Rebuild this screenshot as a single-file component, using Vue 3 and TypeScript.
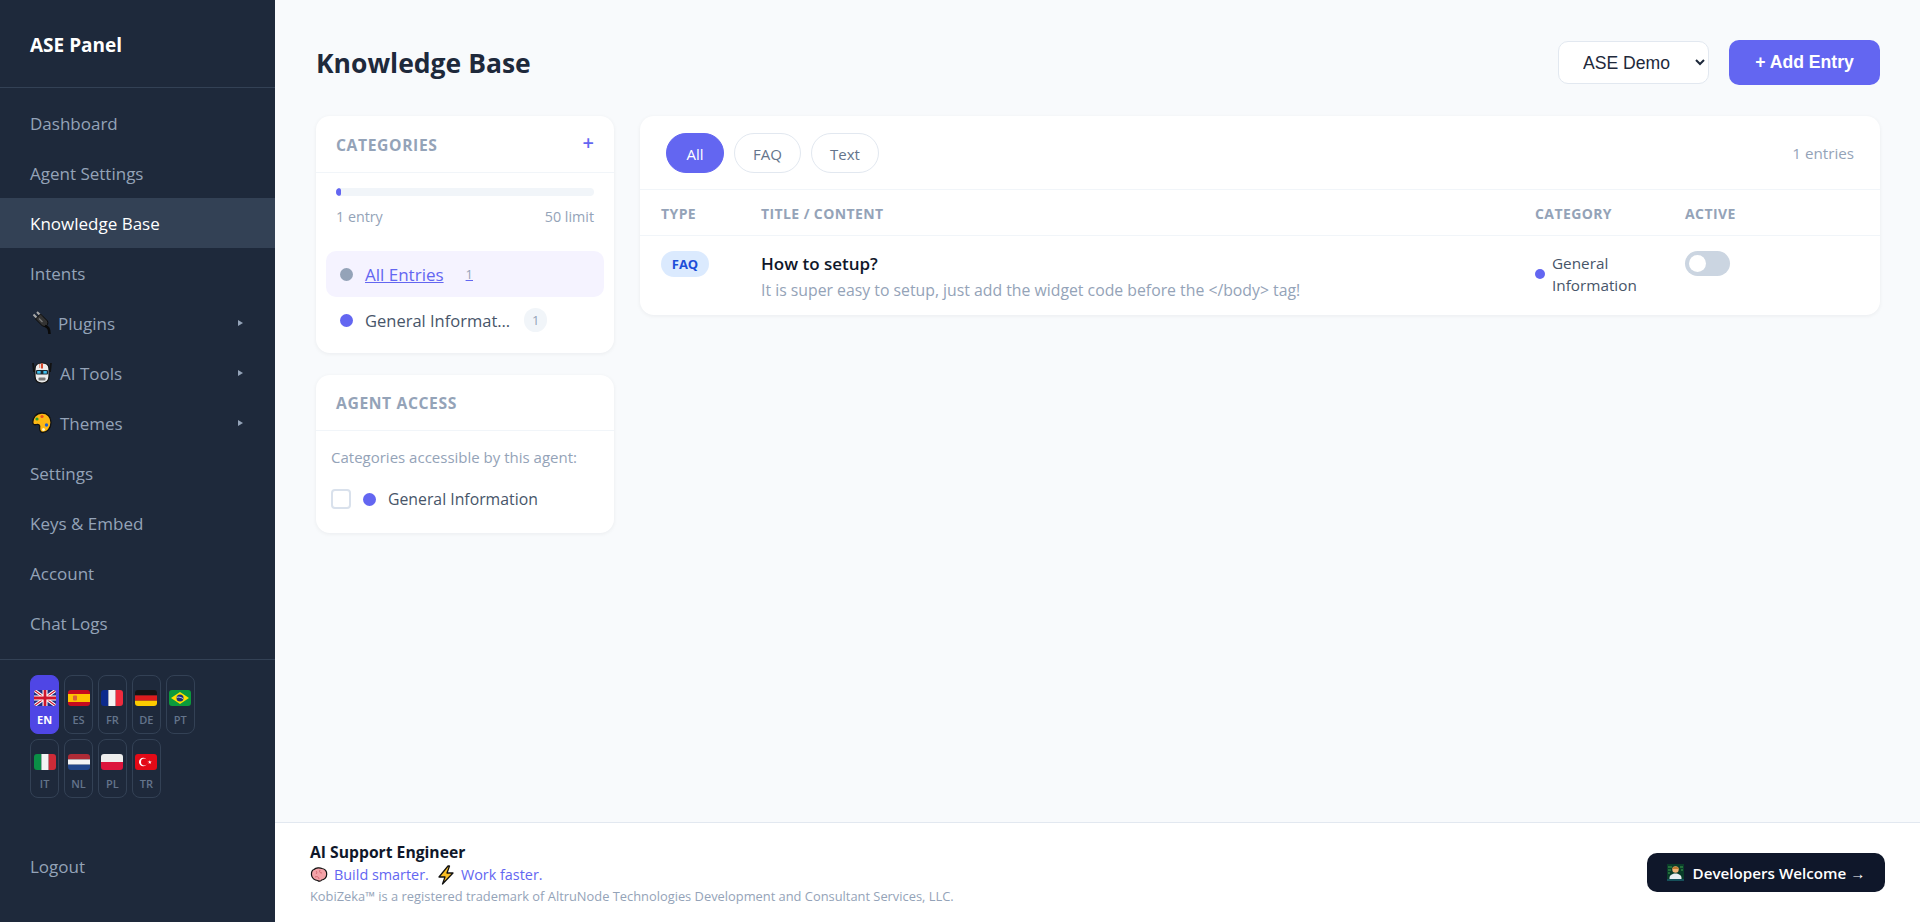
<script setup lang="ts">
interface NavItem { label: string; icon?: string; active?: boolean }
const nav: NavItem[] = [
  { label: 'Dashboard' },
  { label: 'Agent Settings' },
  { label: 'Knowledge Base', active: true },
  { label: 'Intents' },
  { label: 'Plugins', icon: 'plug' },
  { label: 'AI Tools', icon: 'robot' },
  { label: 'Themes', icon: 'palette' },
  { label: 'Settings' },
  { label: 'Keys & Embed' },
  { label: 'Account' },
  { label: 'Chat Logs' },
]
const langs = ['EN', 'ES', 'FR', 'DE', 'PT', 'IT', 'NL', 'PL', 'TR']
</script>

<template>
  <div class="shell">
    <aside class="side">
      <div class="brand">ASE Panel</div>
      <nav class="nav">
        <a v-for="n in nav" :key="n.label" class="nav-item" :class="{ on: n.active }">
          <svg v-if="n.icon === 'plug'" class="emo plug" viewBox="0 0 20 24">
            <path d="M1.500 3.500l5 5M5 1l5 5" stroke="#a8a8a8" stroke-width="2" />
            <path d="M3.500 8L8.500 3l7 7c1 2.500 0 4.500-2.500 5.500l-2.500-.5z" fill="#333" stroke="#0a0a0a" />
            <path d="M13 15c3 .5 4.500 3 4.500 8" fill="none" stroke="#0a0a0a" stroke-width="2.600" />
            <path d="M7 7.500l3.500 3.500" stroke="#777" stroke-width="1.400" />
          </svg>
          <svg v-else-if="n.icon === 'robot'" class="emo" viewBox="0 0 20 24">
            <path d="M1 2l1 9M19 2l-1 9" stroke="#111" stroke-width="1.800" fill="none" />
            <path d="M3 8c0-4 3-6 7-6s7 2 7 6v7c0 5-3 7-7 7s-7-2-7-7z" fill="#ececec" stroke="#111" stroke-width="1.200" />
            <rect x="9" y="2.500" width="2" height="5" fill="#d9472b" />
            <rect x="7.200" y="3" width="1" height="4" fill="#e08a70" />
            <rect x="4" y="9" width="12" height="4.600" rx="1" fill="#1a2730" />
            <rect x="5.200" y="10" width="3.400" height="2.600" fill="#3fc1ef" />
            <rect x="11.400" y="10" width="3.400" height="2.600" fill="#3fc1ef" />
            <rect x="6.500" y="16.500" width="7" height="3" rx="1" fill="#777" />
          </svg>
          <svg v-else-if="n.icon === 'palette'" class="emo" viewBox="0 0 20 24">
            <path d="M10 2C4 2 .6 7 .8 11.500c.1 2 1.600 2.600 3.600 2 2-.6 3.600.4 3.300 2.500-.3 2.500.3 5.500 3.300 5.500 4 0 8-4.500 8-10S15.500 2 10 2z" fill="#fdb813" stroke="#111" stroke-width="1.300" />
            <circle cx="10" cy="5.500" r="1.600" fill="#e8501f" />
            <circle cx="5" cy="8" r="1.600" fill="#2ca02c" />
            <circle cx="14.500" cy="14" r="1.700" fill="#1f5fd0" />
            <circle cx="11.500" cy="18.500" r="1.500" fill="#fff4c8" />
          </svg>
          <span class="nav-label">{{ n.label }}</span>
          <span v-if="n.icon" class="caret"></span>
        </a>
      </nav>
      <div class="langs">
        <button v-for="l in langs" :key="l" class="lang" :class="{ on: l === 'EN' }">
          <svg class="flag" viewBox="0 0 22 16">
            <g v-if="l === 'EN'">
              <rect width="22" height="16" fill="#1f2f80" />
              <path d="M0 0L22 16M22 0L0 16" stroke="#fff" stroke-width="3.200" />
              <path d="M0 0L22 16M22 0L0 16" stroke="#cf142b" stroke-width="1.100" />
              <path d="M11 0V16M0 8H22" stroke="#fff" stroke-width="5" />
              <path d="M11 0V16M0 8H22" stroke="#cf142b" stroke-width="2.800" />
            </g>
            <g v-else-if="l === 'ES'">
              <rect width="22" height="16" fill="#c60b1e" />
              <rect y="4" width="22" height="8" fill="#ffc400" />
              <rect x="5" y="5.500" width="4" height="5" rx="1" fill="#d9603a" />
            </g>
            <g v-else-if="l === 'FR'">
              <rect width="7.400" height="16" fill="#0d2a8c" />
              <rect x="7.400" width="7.300" height="16" fill="#f4f4f4" />
              <rect x="14.700" width="7.300" height="16" fill="#ef2b3d" />
            </g>
            <g v-else-if="l === 'DE'">
              <rect width="22" height="5.400" fill="#141414" />
              <rect y="5.400" width="22" height="5.300" fill="#dd1c1c" />
              <rect y="10.700" width="22" height="5.300" fill="#fccc00" />
            </g>
            <g v-else-if="l === 'PT'">
              <rect width="22" height="16" fill="#0b9a3c" />
              <path d="M11 2L20 8 11 14 2 8z" fill="#fedf00" />
              <circle cx="11" cy="8" r="3.500" fill="#1c2f7a" />
              <path d="M7.800 7.300c2-.5 4.500 0 6.300 1.400" stroke="#fff" stroke-width=".7" fill="none" />
            </g>
            <g v-else-if="l === 'IT'">
              <rect width="7.400" height="16" fill="#0a8f46" />
              <rect x="7.400" width="7.300" height="16" fill="#f4f4f4" />
              <rect x="14.700" width="7.300" height="16" fill="#ce2b37" />
            </g>
            <g v-else-if="l === 'NL'">
              <rect width="22" height="5.400" fill="#ae2b36" />
              <rect y="5.400" width="22" height="5.300" fill="#f4f4f4" />
              <rect y="10.700" width="22" height="5.300" fill="#21468b" />
            </g>
            <g v-else-if="l === 'PL'">
              <rect width="22" height="8" fill="#eeeeee" />
              <rect y="8" width="22" height="8" fill="#dc143c" />
            </g>
            <g v-else>
              <rect width="22" height="16" fill="#e30a17" />
              <circle cx="8.200" cy="8" r="4.200" fill="#fff" />
              <circle cx="9.400" cy="8" r="3.400" fill="#e30a17" />
              <path d="M14.800 6.200l.5 1.300 1.400.1-1.100.9.400 1.400-1.200-.8-1.200.8.400-1.400-1.100-.9 1.400-.1z" fill="#fff" />
            </g>
          </svg>
          <span class="lang-code">{{ l }}</span>
        </button>
      </div>
      <a class="logout">Logout</a>
    </aside>

    <div class="right">
      <main class="main">
        <header class="top">
          <h1 class="title">Knowledge Base</h1>
          <div class="actions">
            <select class="agent"><option>ASE Demo</option></select>
            <button class="add">+ Add Entry</button>
          </div>
        </header>

        <div class="cols">
          <div class="left">
            <section class="card">
              <div class="card-h">
                <span class="card-t">Categories</span>
                <span class="plus">+</span>
              </div>
              <div class="usage">
                <div class="bar"><div class="fill" style="width: 2%"></div></div>
                <div class="usage-t"><span>1 entry</span><span>50 limit</span></div>
              </div>
              <div class="cats">
                <a class="cat on">
                  <i class="dot grey"></i>
                  <span class="cat-n">All Entries</span>
                  <span class="cat-c">1</span>
                </a>
                <a class="cat">
                  <i class="dot"></i>
                  <span class="cat-n trunc">General Information</span>
                  <span class="cat-c">1</span>
                </a>
              </div>
            </section>

            <section class="card">
              <div class="card-h access">
                <span class="card-t">Agent Access</span>
              </div>
              <div class="access-b">
                <p class="access-p">Categories accessible by this agent:</p>
                <label class="chk">
                  <span class="box"></span>
                  <i class="dot"></i>
                  <span>General Information</span>
                </label>
              </div>
            </section>
          </div>

          <section class="card table-card">
            <div class="filters">
              <button class="pill on">All</button>
              <button class="pill">FAQ</button>
              <button class="pill">Text</button>
              <span class="count">1 entries</span>
            </div>
            <div class="row head">
              <span>Type</span>
              <span>Title / Content</span>
              <span>Category</span>
              <span>Active</span>
            </div>
            <div class="row body">
              <div><span class="tag">FAQ</span></div>
              <div>
                <div class="q">How to setup?</div>
                <div class="a">It is super easy to setup, just add the widget code before the &lt;/body&gt; tag!</div>
              </div>
              <div class="cell-cat">
                <i class="dot small"></i>
                <span>General<br />Information</span>
              </div>
              <div><span class="toggle"><span class="knob"></span></span></div>
            </div>
          </section>
        </div>
      </main>

      <footer class="foot">
        <div>
          <div class="f1">AI Support Engineer</div>
          <div class="f2">
            <svg class="fe" viewBox="0 0 18 16">
              <path d="M4 2.500C6 .5 10 .5 12 1.500c3 .3 5 3 4.700 6 0 3-2.700 5.500-5 5.500-1 1.500-3 1.500-4 .5-3 0-6-2.500-6.200-5.500C1.300 5.500 2.500 3 4 2.500z" fill="#f4a3a8" stroke="#111" stroke-width="1.200" />
              <path d="M6 4c1 1 1 2 0 3M10 3c-1 2 0 3 2 3M5 10c2-1 4 0 4 2" stroke="#d0606c" fill="none" stroke-width=".9" />
            </svg>
            <span>Build smarter.</span>
            <svg class="fe bolt" viewBox="0 0 18 20">
              <path d="M11 1L2 12h6l-2.500 7L16 8h-6l2.500-7z" fill="#fbbf24" stroke="#111" stroke-width="1.300" stroke-linejoin="round" />
            </svg>
            <span>Work faster.</span>
          </div>
          <div class="f3">KobiZeka™ is a registered trademark of AltruNode Technologies Development and Consultant Services, LLC.</div>
        </div>
        <button class="dev">
          <svg class="dev-i" viewBox="0 0 17 17">
            <rect width="17" height="17" fill="#0a3d2a" />
            <path d="M1 3h4M1 6h3M13 3h3M14 6h2M1 9h2" stroke="#3fa34d" stroke-width="1" />
            <circle cx="8.500" cy="5.500" r="3.200" fill="#f2b277" />
            <path d="M5.300 5c0-3 6.400-3 6.400 0z" fill="#c17a2e" />
            <path d="M2.500 14c0-3 3-4.500 6-4.500s6 1.500 6 4.500v1h-12z" fill="#e8eef2" />
            <rect y="15" width="17" height="2" fill="#16505a" />
          </svg>
          <span>Developers Welcome →</span>
        </button>
      </footer>
    </div>
  </div>
</template>

<style>
body { margin: 0; }
</style>

<style scoped>
* { box-sizing: border-box; }
.shell {
  display: flex;
  height: 922px;
  font-family: "Open Sans", "Noto Sans", sans-serif;
  color: #1e293b;
  background: #f8fafc;
  overflow: hidden;
}
.side {
  width: 275px;
  flex: none;
  background: #1e293b;
  display: flex;
  flex-direction: column;
}
.brand {
  height: 88px;
  padding: 31px 30px 0;
  border-bottom: 1px solid #334155;
  color: #fff;
  font-size: 19px;
  font-weight: 700;
  line-height: 28px;
}
.nav { padding: 10px 0 11px; border-bottom: 1px solid #334155; }
.nav-item {
  height: 50px;
  padding: 0 30px;
  display: flex;
  align-items: center;
  color: #94a3b8;
  font-size: 17px;
}
.nav-item.on { background: #334155; color: #fff; }
.emo { width: 20px; height: 24px; margin: 0 8px 0 2px; flex: none; }
.emo.plug { margin-right: 6px; }
.nav-label { flex: 1; }
.caret {
  width: 0;
  height: 0;
  margin-right: 2px;
  border-left: 5px solid #94a3b8;
  border-top: 3px solid transparent;
  border-bottom: 3px solid transparent;
}
.langs {
  padding: 15px 70px 0 30px;
  display: flex;
  flex-wrap: wrap;
  gap: 5px 4.600px;
  align-content: flex-start;
  height: 182px;
  flex: none;
}
.lang {
  width: 29.300px;
  height: 59px;
  padding: 14px 0 0;
  border: 1px solid #334155;
  border-radius: 8px;
  background: transparent;
  display: flex;
  flex-direction: column;
  align-items: center;
  font-family: inherit;
}
.lang.on { background: #4f46e5; border-color: #4f46e5; }
.flag { width: 22px; height: 16px; border-radius: 3px; display: block; flex: none; }
.lang-code {
  margin-top: 7px;
  font-size: 11px;
  line-height: 14px;
  font-weight: 600;
  color: #64748b;
}
.lang.on .lang-code { color: #fff; font-weight: 700; }
.logout {
  padding: 0 30px;
  color: #94a3b8;
  font-size: 17px;
  line-height: 50px;
}
.right { flex: 1; min-width: 0; display: flex; flex-direction: column; }
.main { flex: 1; padding: 40px 40px 0 41px; min-height: 0; }
.top { display: flex; justify-content: space-between; align-items: center; height: 45px; margin-bottom: 31px; }
.title { margin: 0; font-size: 26.500px; font-weight: 700; line-height: 48px; color: #1e293b; }
.actions { display: flex; align-items: center; gap: 20px; }
.agent {
  width: 151px;
  height: 43px;
  padding: 0 8px 0 20px;
  border: 1px solid #e2e8f0;
  border-radius: 10px;
  background: #fff;
  font-family: "Liberation Sans", sans-serif;
  font-size: 17.600px;
  color: #1e293b;
}
.add {
  width: 151px;
  height: 45px;
  border: 0;
  border-radius: 10px;
  background: #6366f1;
  color: #fff;
  font-family: "Liberation Sans", sans-serif;
  font-size: 17.600px;
  font-weight: 700;
}
.cols { display: grid; grid-template-columns: 298px 1fr; gap: 26px; align-items: start; }
.left { display: flex; flex-direction: column; gap: 22px; }
.card {
  background: #fff;
  border-radius: 14px;
  box-shadow: 0 1px 4px rgba(15, 23, 42, 0.06);
}
.card-h {
  height: 57px;
  padding: 2px 20px 0;
  display: flex;
  align-items: center;
  justify-content: space-between;
  border-bottom: 1px solid #f1f5f9;
}
.card-h.access { height: 56px; padding-top: 0; }
.card-t {
  font-size: 15.700px;
  font-weight: 700;
  letter-spacing: 0.6px;
  text-transform: uppercase;
  color: #94a3b8;
}
.plus { color: #6366f1; font-size: 20px; font-weight: 600; line-height: 20px; margin-top: -4px; }
.usage { padding: 15px 20px 0; }
.bar { height: 8px; border-radius: 4px; background: #f1f5f9; overflow: hidden; }
.fill { height: 100%; border-radius: 4px; background: #6366f1; }
.usage-t {
  margin-top: 12px;
  display: flex;
  justify-content: space-between;
  font-size: 14.300px;
  line-height: 18px;
  color: #94a3b8;
}
.cats { padding: 25px 10px 10px; }
.cat {
  height: 46px;
  padding: 0 14px;
  border-radius: 10px;
  display: flex;
  align-items: center;
  gap: 12px;
  font-size: 16.500px;
  color: #475569;
}
.cat.on { background: #f5f3ff; color: #6366f1; text-decoration: underline; font-size: 17px; }
.dot { width: 13px; height: 13px; border-radius: 50%; background: #6366f1; flex: none; }
.dot.grey { background: #94a3b8; }
.dot.small { width: 10px; height: 10px; }
.cat-n { min-width: 0; }
.trunc { max-width: 147px; white-space: nowrap; overflow: hidden; text-overflow: ellipsis; }
.cat-c {
  padding: 2px 8px;
  border-radius: 12px;
  font-size: 13px;
  line-height: 20px;
  color: #94a3b8;
  background: #f1f5f9;
}
.cat.on .cat-c { background: transparent; color: #94a3b8; margin-left: 2px; }
.access-b { padding: 14px 15px 23px; }
.access-p { margin: 0; font-size: 15px; line-height: 24px; color: #94a3b8; }
.chk { margin-top: 19px; display: flex; align-items: center; gap: 12px; font-size: 15.800px; color: #475569; }
.box { width: 20px; height: 20px; border: 2px solid #d9e1ec; border-radius: 4px; flex: none; }
.filters {
  height: 74px;
  padding: 0 26px;
  display: flex;
  align-items: center;
  gap: 10px;
  border-bottom: 1px solid #f1f5f9;
}
.pill {
  height: 40px;
  padding: 2px 18px 0;
  border: 1px solid #e2e8f0;
  border-radius: 20px;
  background: #fff;
  font-family: inherit;
  font-size: 15px;
  color: #64748b;
}
.pill.on { background: #6366f1; border-color: #6366f1; color: #fff; padding: 2px 19.500px 0; }
.count { margin-left: auto; font-size: 15.200px; color: #94a3b8; }
.row {
  display: grid;
  grid-template-columns: 100px 774px 150px 1fr;
  padding: 0 20px 0 21px;
}
.row.head {
  height: 46px;
  padding-top: 1px;
  align-items: center;
  border-bottom: 1px solid #f1f5f9;
  font-size: 14px;
  font-weight: 700;
  letter-spacing: 0.4px;
  text-transform: uppercase;
  color: #94a3b8;
}
.row.body { padding-top: 15px; height: 79px; }
.tag {
  display: inline-block;
  width: 48px;
  height: 26px;
  border-radius: 13px;
  background: #dbeafe;
  color: #1d4ed8;
  font-size: 13px;
  font-weight: 700;
  line-height: 26px;
  text-align: center;
}
.q { font-size: 17px; font-weight: 600; line-height: 26px; color: #0f172a; }
.a { margin-top: 1px; font-size: 15.800px; line-height: 25px; color: #94a3b8; }
.cell-cat { display: flex; align-items: center; gap: 7px; font-size: 15.300px; line-height: 22px; color: #475569; height: 46px; }
.toggle { display: block; width: 45px; height: 25px; border-radius: 13px; background: #cbd5e1; position: relative; }
.knob { position: absolute; left: 4px; top: 4px; width: 17px; height: 17px; border-radius: 50%; background: #fff; }
.foot {
  height: 100px;
  flex: none;
  padding: 0 35px;
  background: #fff;
  border-top: 1px solid #e2e8f0;
  display: flex;
  align-items: center;
  justify-content: space-between;
}
.f1 { font-size: 15.700px; font-weight: 700; line-height: 24px; color: #0f172a; }
.f2 { display: flex; align-items: center; padding-top: 1px; font-size: 14.400px; font-weight: 500; line-height: 20px; color: #6366f1; }
.fe { width: 18px; height: 16px; margin-right: 6px; flex: none; }
.bolt { width: 18px; height: 20px; margin-left: 8px; }
.f3 { margin-top: 2px; font-size: 12.870px; line-height: 18px; color: #94a3b8; }
.dev {
  width: 238px;
  height: 39px;
  border: 0;
  border-radius: 10px;
  background: #0f172a;
  color: #fff;
  display: flex;
  align-items: center;
  justify-content: center;
  gap: 9px;
  font-family: inherit;
  font-size: 15.200px;
  font-weight: 600;
}
.dev-i { width: 17px; height: 17px; flex: none; }
</style>
